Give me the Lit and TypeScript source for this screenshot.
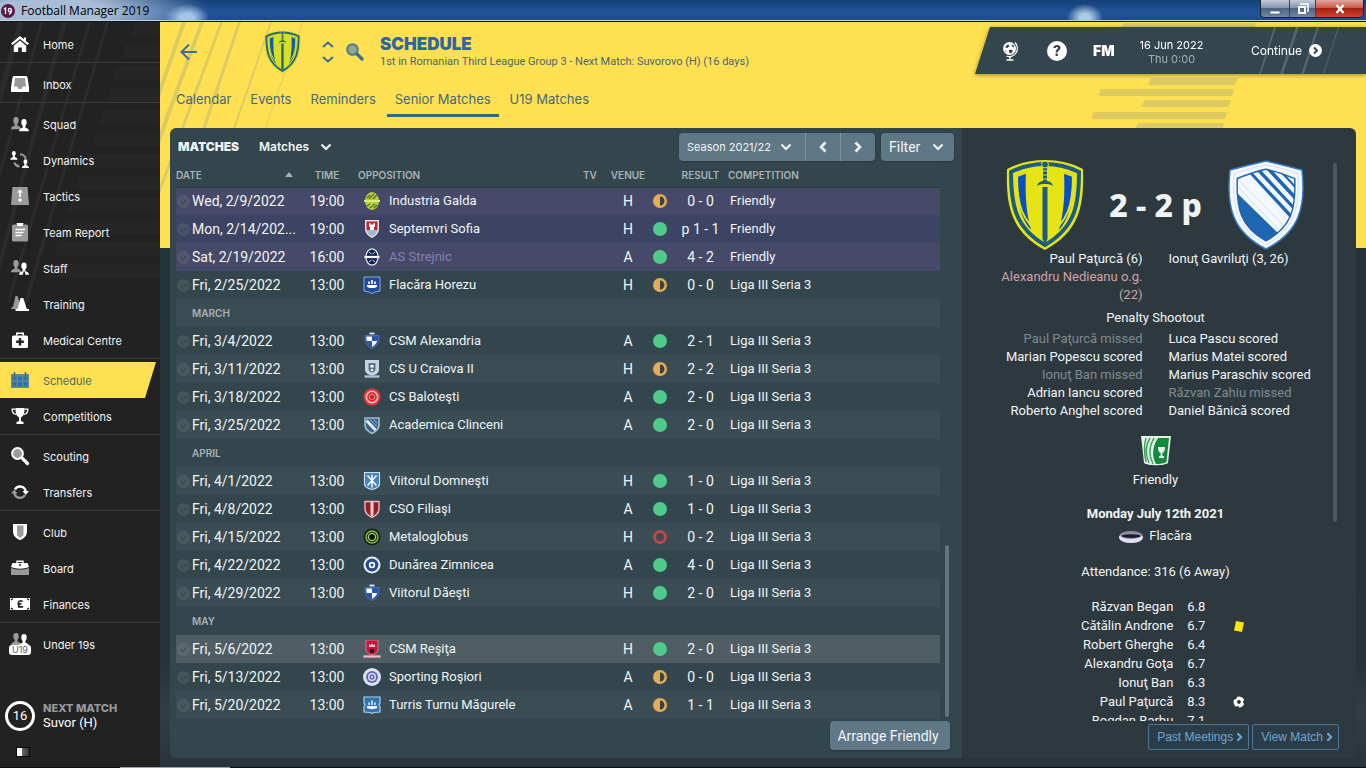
import { LitElement, html, svg, css, nothing } from "lit";
import { customElement, query } from "lit/decorators.js";
import { classMap } from "lit/directives/class-map.js";

const W = "#ffffff";
const G = "#9a9a9a";

/* Sidebar glyphs, drawn on an 18 x 18 grid */
const person = (x: number, y: number, fill: string) => svg`
  <g transform="translate(${x} ${y})" fill=${fill}>
    <ellipse cx="5" cy="3.4" rx="2.7" ry="3.4"/>
    <path d="M0 12.2c.2-2.4 1.500-2.900 3.600-3.500V6h2.800v2.700c2.100.6 3.400 1.100 3.600 3.500z"/>
  </g>`;

const glyphs: Record<string, unknown> = {
  home: svg`<path d="M9 1 0 8.600l1.500 1.500L9 3.900l7.500 6.200L18 8.600l-3-2.500V2.500h-2.200v1.700z" fill=${W}/><path d="M9 5.500l-6.200 5.200V17h4.400v-4.500h3.600V17h4.400v-6.300z" fill=${W}/>`,
  inbox: svg`<path d="M3.500 1h11c1 0 1.800.6 2 1.600L18 12v5H0v-5l1.500-9.400C1.700 1.600 2.500 1 3.500 1z" fill=${W}/><path d="M4 3h10l1 8.500h-3.200L10.500 14h-3l-1.300-2.500H3z" fill=${G}/>`,
  squad: svg`${person(0, 2, G)}${person(8, 4, W)}`,
  dynamics: svg`<g transform="scale(.72)">${person(-1, 0, W)}${person(15, 11.500, W)}</g><path d="M9 3.200a6.500 6.500 0 0 1 5.800 4.600M8.500 15.500A6.500 6.500 0 0 1 3.200 11.500" fill="none" stroke=${G} stroke-width="2"/>`,
  tactics: svg`<path d="M1.500 0h15L18 18H0z" fill=${G}/><path d="M8.200 10V5.500H6L9 2.200l3 3.300H9.800V10z" fill=${W}/><circle cx="9" cy="13" r="1.700" fill=${W}/>`,
  report: svg`<rect x="1" y="1.500" width="16" height="17" rx="1.500" fill=${G}/><path d="M5.500 0h7l-1 3h-5z" fill=${W}/><path d="M4.500 6.500h9.500M4.500 9.500h8M4.500 12.500h6" stroke=${W} stroke-width="1.300"/>`,
  staff: svg`${person(0, 1, G)}${person(8, 3.500, W)}<path d="M12.500 12.500h1.400l.6 3.500h-2.600z" fill="#222"/>`,
  training: svg`<path d="M4.500 1h2l3 9-2 4H0l1-2h1z" fill=${G}/><path d="M9.500 3h2.800l3.500 11H18v2H4.500v-2h2z" fill=${W}/>`,
  medical: svg`<rect x="1" y="4.500" width="16" height="12.500" rx="1.500" fill=${W}/><path d="M5.800 4.500V2.200h6.400v2.300" fill="none" stroke=${W} stroke-width="1.600"/><path d="M9 7v7.500M5.200 10.700h7.600" stroke="#222" stroke-width="2.400"/>`,
  schedule: svg`<path d="M0 3h18v14H0z" fill="#5d8791"/><path d="M3.500 1v4M14.500 1v4" stroke="#39688a" stroke-width="1.500"/><path d="M1.500 5.500h4v4h-4zM7 5.500h4v4H7zM12.500 5.500h4v4h-4zM1.500 11h4v4.500h-4zM7 11h4v4.500H7zM12.500 11h4v4.500h-4z" fill="#2f6fae"/>`,
  trophy: svg`<path d="M4.500 1h9c.2 5-.8 8-3.600 9.500V14l2.600 1v2h-7v-2l2.600-1v-3.500C5.300 9 4.300 6 4.500 1z" fill=${W}/><path d="M4.500 2.200H1.200C1.200 6 2.600 7.200 5.500 7.400M13.500 2.200h3.300c0 3.800-1.400 5-4.300 5.200" fill="none" stroke=${W} stroke-width="1.300"/>`,
  scouting: svg`<circle cx="6.500" cy="6.500" r="5.400" fill=${G} stroke=${W} stroke-width="2"/><path d="M11.500 11.500l5 5" stroke=${W} stroke-width="3.200" stroke-linecap="round"/>`,
  transfers: svg`<path d="M4 6.500A5.800 5.800 0 0 1 14.700 8" fill="none" stroke=${W} stroke-width="2.400"/><path d="M11.500 8H18l-3.200 4z" fill=${W}/><path d="M14 12A5.800 5.800 0 0 1 3.300 10" fill="none" stroke=${G} stroke-width="2.400"/><path d="M0 10.500h6.500l-3.200-4z" fill=${G}/>`,
  club: svg`<path d="M2 1h14v7c0 5-3 7.500-7 9-4-1.500-7-4-7-9z" fill=${W}/><path d="M6 2.500h6.500V12c-1 1.300-2 2-3.300 2.800C8 14 7 13.300 6 12z" fill=${G}/>`,
  board: svg`<path d="M0 9c6 2.300 12 2.300 18 0v7H0z" fill=${G}/><path d="M1.500 4h15L18 8c-6 2.300-12 2.300-18 0z" fill=${W}/><path d="M6 4V2.200h6V4" fill="none" stroke=${W} stroke-width="1.400"/><circle cx="9" cy="6" r="1.100" fill="#222"/>`,
  finances: svg`<path d="M-1 3h20v12H-1z" fill=${W}/><path d="M0 5l2-1.500M18 5l-2-1.500M0 13l2 1.500M18 13l-2 1.500" stroke="#222" stroke-width="1.300"/><path d="M11.500 6.700c-.5-1.300-3.800-1.500-3.900.8 0 1.200.8 2.300.2 4.400h4.300M6.300 9h4.300" fill="none" stroke="#222" stroke-width="1.700"/>`,
};

interface NavItem { label: string; icon: string; active?: boolean }
const navGroups: NavItem[][] = [
  [{ label: "Home", icon: "home" }],
  [{ label: "Inbox", icon: "inbox" }],
  [
    { label: "Squad", icon: "squad" },
    { label: "Dynamics", icon: "dynamics" },
    { label: "Tactics", icon: "tactics" },
    { label: "Team Report", icon: "report" },
    { label: "Staff", icon: "staff" },
    { label: "Training", icon: "training" },
    { label: "Medical Centre", icon: "medical" },
  ],
  [
    { label: "Schedule", icon: "schedule", active: true },
    { label: "Competitions", icon: "trophy" },
  ],
  [
    { label: "Scouting", icon: "scouting" },
    { label: "Transfers", icon: "transfers" },
  ],
  [
    { label: "Club", icon: "club" },
    { label: "Board", icon: "board" },
    { label: "Finances", icon: "finances" },
  ],
  [{ label: "Under 19s", icon: "u19" }],
];

/* Small club crests, 18 x 18 */
const tinyShield = "M2 2h14v7c0 4-3 6.500-7 8.500C5 15.500 2 13 2 9z";
const crests: Record<string, unknown> = {
  galda: svg`<ellipse cx="9" cy="9" rx="7" ry="9" fill="#b9cf3c"/><path d="M4 6l3-3M6 7l5-5M10 7l4-4M4 14l3-2M7 16l5-4M11 16l3-3" stroke="#53681c" stroke-width="1.100"/><path d="M1 9h16" stroke="#dcea7c" stroke-width="2"/>`,
  sofia: svg`<path d="M2 0h14v9c0 4-3 7-7 9-4-2-7-5-7-9z" fill="#e9dede"/><path d="M3.500 1.500h11V10h-11z" fill="#c2242f"/><path d="M3.500 10h11c-.5 3-2.500 5-5.500 6.500C6 15 4 13 3.500 10z" fill="#9db9d8"/><path d="M6 3h1.500v1.500h3V3H12v4h-1v3H7V7H6z" fill="#fff"/>`,
  strejnic: svg`<ellipse cx="9" cy="9" rx="6" ry="8.200" fill="#14244f" stroke="#e9eef8" stroke-width="1.200"/><path d="M6 4l2.500 2M12 4L9.500 6M6 14l2.500-2M12 14l-2.500-2" stroke="#cfd9ee"/><path d="M1.500 9h15" stroke="#fff" stroke-width="2.200"/>`,
  horezu: svg`<path d="M1 1h16v14l-5 1-3 1.500L6 16l-5-1z" fill="#2249a0" stroke="#a9c0e8" stroke-width=".8"/><path d="M4 9h10v1.500c-1 2-9 2-10 0z" fill="#fff"/><path d="M6 8V5.500M9 8V4M12 8V5.500" stroke="#fff" stroke-width="1.700"/>`,
  checker: svg`<path d="M2 3.500h14v4c0 4-3 7-7 9-4-2-7-5-7-9z" fill="#2c55a8" stroke="#4f79c6" stroke-width=".8"/><path d="M9 4.500V9H3.800C3.500 8 3.400 6.500 3.400 4.500zM9 9h5.200c-.8 2.500-2.800 4.500-5.200 6z" fill="#fff"/><path d="M6.500 1.500h5" stroke="#dfe8f6" stroke-width="1.800"/>`,
  craiova: svg`<path d="M2 0h14v9c0 4-3 6-7 6.500C5 15 2 13 2 9z" fill="#c3d5e3"/><path d="M5.500 3h7v6c0 2-1.500 3-3.500 3.500C7 12 5.500 11 5.500 9z" fill="#54728c"/><path d="M7.500 5h3v2.500h-3zM8 9h2v2H8z" fill="#fff"/><path d="M1.500 16.500h15" stroke="#aac2d6" stroke-width="2.400"/>`,
  balotesti: svg`<circle cx="9" cy="9" r="8.700" fill="#d7343d"/><circle cx="9" cy="9" r="5.700" fill="none" stroke="#f5c4bd" stroke-width="1.600"/><circle cx="9" cy="9" r="2.600" fill="#b4262e" stroke="#f0a49c" stroke-width=".8"/>`,
  clinceni: svg`<path d=${tinyShield} fill="#3a648f" stroke="#9db9cf" stroke-width="1.600"/><path d="M3.500 4.500l9 9.500" stroke="#e6eff6" stroke-width="2.800"/><path d="M7 3.500l7 7M10.500 3.500l4 4" stroke="#9cb9d0"/>`,
  domnesti: svg`<path d="M1.500.5h15V12c0 3-3 4.500-7.500 5.500C4.500 16.500 1.500 15 1.500 12z" fill="#4382c4" stroke="#cfe2f3" stroke-width="1.100"/><path d="M9 2.500v13M4.500 3.500l9 10M13.500 3.500l-9 10" stroke="#fff" stroke-width="1.400"/>`,
  filiasi: svg`<path d="M2 1.500h14v7.500c0 4-3 6.500-7 8.500C5 15.500 2 13 2 9z" fill="#8f1f2b" stroke="#f1b9b9" stroke-width="1.400"/><path d="M7.200 2h3.600v13L9 16.500 7.200 15z" fill="#e88"/><path d="M9 2v14" stroke="#fff" stroke-width="1.200"/>`,
  metalo: svg`<circle cx="9" cy="9" r="8.500" fill="#17230f"/><circle cx="9" cy="9" r="6" fill="none" stroke="#86bb45" stroke-width="1.500"/><circle cx="9" cy="9" r="3.600" fill="#0d150a" stroke="#a9d564" stroke-width="1.300"/>`,
  dunarea: svg`<circle cx="9" cy="9" r="8.500" fill="#e8edf6"/><circle cx="9" cy="9" r="6.400" fill="#254a90"/><circle cx="9" cy="9" r="3.200" fill="#fff"/><circle cx="9" cy="9" r="1.500" fill="#254a90"/>`,
  resita: svg`<path d="M3 0h12v9c0 3-2.500 5-6 6-3.500-1-6-3-6-6z" fill="#c4173f" stroke="#e38aa0" stroke-width=".8"/><path d="M6 4l1.500 1.500L9 3.500l1.500 2L12 4v3H6z" fill="#f7d3da"/><path d="M7 9h4v4H7z" fill="#4d0b1b"/><path d="M.5 16.500h17" stroke="#eeb8c4" stroke-width="2.300"/>`,
  rosiori: svg`<circle cx="9" cy="9" r="9" fill="#dfe1f4"/><circle cx="9" cy="9" r="6" fill="#6669b8"/><circle cx="9" cy="9" r="3.300" fill="none" stroke="#e6e6f8" stroke-width="1.300"/><circle cx="9" cy="9" r="1" fill="#e6e6f8"/>`,
  turris: svg`<path d="M1 1h16v6l-1 2 1 2v5l-6 .5-2 1-2-1L1 16v-5l1-2-1-2z" fill="#3173ad" stroke="#a9d0ee" stroke-width="1.200"/><path d="M4 10h10v2c-1 1.500-9 1.500-10 0z" fill="#eaf4fc"/><path d="M6 9V6.500M9 9V4.500M12 9V6.500" stroke="#eaf4fc" stroke-width="1.500"/>`,
};

type Outcome = "win" | "draw" | "loss";
interface Match {
  date: string; time: string; team: string; crest: string;
  venue: "H" | "A"; outcome: Outcome; score: string; comp: string; muted?: boolean; selected?: boolean;
}
const L3 = "Liga III Seria 3";
const m = (date: string, time: string, team: string, crest: string, venue: "H" | "A", outcome: Outcome, score: string, comp = L3, extra: Partial<Match> = {}): Match =>
  ({ date, time, team, crest, venue, outcome, score, comp, ...extra });

const rows: (string | Match)[] = [
  m("Wed, 2/9/2022", "19:00", "Industria Galda", "galda", "H", "draw", "0 - 0", "Friendly"),
  m("Mon, 2/14/202...", "19:00", "Septemvri Sofia", "sofia", "H", "win", "p 1 - 1", "Friendly"),
  m("Sat, 2/19/2022", "16:00", "AS Strejnic", "strejnic", "A", "win", "4 - 2", "Friendly", { muted: true }),
  m("Fri, 2/25/2022", "13:00", "Flacăra Horezu", "horezu", "H", "draw", "0 - 0"),
  "MARCH",
  m("Fri, 3/4/2022", "13:00", "CSM Alexandria", "checker", "A", "win", "2 - 1"),
  m("Fri, 3/11/2022", "13:00", "CS U Craiova II", "craiova", "H", "draw", "2 - 2"),
  m("Fri, 3/18/2022", "13:00", "CS Baloteşti", "balotesti", "A", "win", "2 - 0"),
  m("Fri, 3/25/2022", "13:00", "Academica Clinceni", "clinceni", "A", "win", "2 - 0"),
  "APRIL",
  m("Fri, 4/1/2022", "13:00", "Viitorul Domneşti", "domnesti", "H", "win", "1 - 0"),
  m("Fri, 4/8/2022", "13:00", "CSO Filiaşi", "filiasi", "A", "win", "1 - 0"),
  m("Fri, 4/15/2022", "13:00", "Metaloglobus", "metalo", "H", "loss", "0 - 2"),
  m("Fri, 4/22/2022", "13:00", "Dunărea Zimnicea", "dunarea", "A", "win", "4 - 0"),
  m("Fri, 4/29/2022", "13:00", "Viitorul Dăeşti", "checker", "H", "win", "2 - 0"),
  "MAY",
  m("Fri, 5/6/2022", "13:00", "CSM Reşiţa", "resita", "H", "win", "2 - 0", L3, { selected: true }),
  m("Fri, 5/13/2022", "13:00", "Sporting Roşiori", "rosiori", "A", "draw", "0 - 0"),
  m("Fri, 5/20/2022", "13:00", "Turris Turnu Măgurele", "turris", "A", "draw", "1 - 1"),
];

const dots: Record<Outcome, unknown> = {
  win: svg`<circle cx="7" cy="7" r="7" fill="#4fca8b"/>`,
  draw: svg`<circle cx="7" cy="7" r="7" fill="#e2ad55"/><path d="M7 2.500a4.500 4.500 0 0 1 0 9z" fill="#3a4046"/>`,
  loss: svg`<circle cx="7" cy="7" r="5.500" fill="none" stroke="#bf474c" stroke-width="3"/>`,
};

const shootout: { left: string; leftMiss: boolean; right: string; rightMiss: boolean }[] = [
  { left: "Paul Paţurcă missed", leftMiss: true, right: "Luca Pascu scored", rightMiss: false },
  { left: "Marian Popescu scored", leftMiss: false, right: "Marius Matei scored", rightMiss: false },
  { left: "Ionuţ Ban missed", leftMiss: true, right: "Marius Paraschiv scored", rightMiss: false },
  { left: "Adrian Iancu scored", leftMiss: false, right: "Răzvan Zahiu missed", rightMiss: true },
  { left: "Roberto Anghel scored", leftMiss: false, right: "Daniel Bănică scored", rightMiss: false },
];

const ratings: { name: string; value: string; mark?: "card" | "goal" }[] = [
  { name: "Răzvan Began", value: "6.8" },
  { name: "Cătălin Androne", value: "6.7", mark: "card" },
  { name: "Robert Gherghe", value: "6.4" },
  { name: "Alexandru Goţa", value: "6.7" },
  { name: "Ionuţ Ban", value: "6.3" },
  { name: "Paul Paţurcă", value: "8.3", mark: "goal" },
  { name: "Bogdan Barbu", value: "7.1" },
];

/* Club crest with the sword, 78 x 90 */
const swordCrest = (cls: string, body: string, line: string, panel: string) => html`
  <svg class=${cls} viewBox="0 0 78 90" aria-hidden="true">
    <path d="M39 0C52 0 66 3 77 9c1 34-2 62-38 81C3 71 0 43 1 9 12 3 26 0 39 0z" fill=${body}/>
    <path d="M39 4c12 0 24 3 34 8 0 31-3 55-34 73C8 67 5 43 5 12 15 7 27 4 39 4z" fill="none" stroke=${line} stroke-width="4"/>
    <path d="M11 15l9-3c-1 22 0 40 5 58C14 58 11 40 11 15zM67 15l-9-3c1 22 0 40-5 58 11-12 14-30 14-55z" fill=${panel}/>
    <path d="M39 10c9 0 18 2 28 6 0 28-4 45-28 63-24-18-28-35-28-63 10-4 19-6 28-6z" fill="none" stroke=${body} stroke-width="2"/>
    <path d="M36.500 27h5v52l-2.500 5-2.500-5z" fill=${line}/>
    <path d="M31 26c1-4 4-5 8-5s7 1 8 5c-3-2-5-2-8-2s-5 0-8 2z" fill=${line}/>
    <path d="M37 7h4v15h-4z" fill=${line}/>
    <path d="M36 11h6M36 15h6M36 19h6" stroke=${body} stroke-width="1"/>
    <circle cx="39" cy="4.500" r="3.500" fill=${line} stroke=${body} stroke-width="1"/>
  </svg>`;

const stripedCrest = html`
  <svg class="crest-big" viewBox="0 0 78 90" aria-hidden="true">
    <defs><clipPath id="inner"><path d="M39 10c9 2 19 5 28 9 1 30-3 47-28 61C14 66 10 48 11 19c10-4 19-7 28-9z"/></clipPath></defs>
    <path d="M39 1c13 3 25 6 36 9 4 36-2 62-36 79C5 72-1 46 3 10 14 7 26 4 39 1z" fill="#f4f8ff" stroke="#2f78c4" stroke-width="1.500"/>
    <path d="M39 5c12 2 22 5 32 9 2 32-3 55-32 71C10 69 5 46 7 14c10-4 20-7 32-9z" fill="none" stroke="#d8dfee" stroke-width="1"/>
    <path d="M39 10c9 2 19 5 28 9 1 30-3 47-28 61C14 66 10 48 11 19c10-4 19-7 28-9z" fill="none" stroke="#1f66b0" stroke-width="3"/>
    <g clip-path="url(#inner)">
      <path d="M0 0h78v90H0z" fill="#1f66b0"/>
      <path d="M8 12h13l44 48-13 14L8 31z" fill="#f4f8ff"/>
      <path d="M27 11l45 48M36 9l37 40M47 9l27 29M57 10l16 17" stroke="#f4f8ff" stroke-width="4.500"/>
      <path d="M8 24l48 50M10 18l52 53" stroke="#d3d9e8" stroke-width="1"/>
    </g>
  </svg>`;

const chevronDown = (cls = "") => html`<svg class="chev ${cls}" viewBox="0 0 12 8" aria-hidden="true"><path d="M1.500 1.500 6 6l4.500-4.500" fill="none" stroke="currentColor" stroke-width="2.200"/></svg>`;
const chevronSide = (d: string) => html`<svg class="side" viewBox="0 0 8 12" aria-hidden="true"><path d=${d} fill="none" stroke="currentColor" stroke-width="2.500"/></svg>`;
const RIGHT = "M1.500 1.500 6 6l-4.500 4.500";
const LEFT = "M6.500 1.500 2 6l4.500 4.500";

@customElement("fm-sidebar")
class FmSidebar extends LitElement {
  static styles = css`
    :host { display: flex; flex-direction: column; background: #222; position: relative; overflow: hidden; color: #f2f2f2; font: 11px/16px "Inter", "Liberation Sans", sans-serif; }
    .deco { position: absolute; left: 0; top: 0; width: 160px; height: 400px; pointer-events: none; }
    nav { position: relative; }
    .group { border-top: 1px solid #3b3b3b; padding-top: 3px; }
    .group:first-child { border-top-color: transparent; }
    a { display: flex; align-items: center; height: 36px; padding: 0 0 0 11px; gap: 14px; color: inherit; text-decoration: none; }
    a svg { width: 18px; height: 18px; overflow: visible; flex: none; }
    .text { padding-top: 2px; }
    .active { background: #fee052; color: #4d6a5c; clip-path: polygon(0 0, 156px 0, 145px 100%, 0 100%); }
    .u19 { display: grid; width: 22px; height: 22px; margin: 0 -2px; }
    .u19 svg { grid-area: 1 / 1; justify-self: center; }
    .u19 span { grid-area: 1 / 1; align-self: end; background: #fff; color: #47618a; border-radius: 3px; font-size: 9px; line-height: 10px; text-align: center; z-index: 1; }
    .next { position: relative; display: flex; align-items: center; gap: 8px; padding: 39px 5px 0; color: #fff; }
    .count { box-sizing: border-box; width: 30px; height: 30px; border: 3px solid #fff; border-radius: 50%; display: grid; place-items: center; font: 13px/14px Roboto, sans-serif; }
    .label { color: #989898; font-weight: 800; line-height: 14px; }
    .who { font: 13px/16px Roboto, sans-serif; }
    .kit { width: 12px; height: 8px; margin: 16px 0 0 16px; background: linear-gradient(90deg, #fff 45%, #666 45%, #333); border: 1px solid #0d0d0d; }
  `;

  render() {
    return html`
      <svg class="deco" viewBox="0 0 160 400" aria-hidden="true">
        <path d="M18 0h6L-30 190h-6zM40 0h3L-20 230h-3zM62 0h5L-14 300h-4zM88 0h3L10 280H7zM106 0h3L28 280h-4z" fill="#2b2b2b"/>
        <path d="M135 0h25v14h-29zM126 22h34v14h-38zM116 44h44v14h-48zM110 66h50v14h-54zM104 88h56v14h-60zM96 110h64v14H92zM88 132h72v14H84zM78 154h82v14H74zM72 176h88v14H68zM66 198h94v14H62zM58 220h102v14H54zM50 242h110v14H46z" fill="#262626"/>
      </svg>
      <nav>
        ${navGroups.map((g) => html`
          <div class="group">
            ${g.map((i) => html`
              <a href="#" class=${classMap({ active: !!i.active })}>
                ${i.icon === "u19"
                  ? html`<span class="u19"><svg viewBox="0 0 18 18">${person(0, 0, G)}${person(8, 1, W)}</svg><span>U19</span></span>`
                  : html`<svg viewBox="0 0 18 18" aria-hidden="true">${glyphs[i.icon]}</svg>`}
                <span class="text">${i.label}</span>
              </a>`)}
          </div>`)}
      </nav>
      <div class="next">
        <div class="count">16</div>
        <div><div class="label">NEXT MATCH</div><div class="who">Suvor (H)</div></div>
      </div>
      <div class="kit"></div>
    `;
  }
}

@customElement("fm-matches")
class FmMatches extends LitElement {
  @query(".scroll") scroller!: HTMLElement;

  static styles = css`
    :host { display: flex; flex-direction: column; min-height: 0; box-sizing: border-box; padding: 4px 8px 8px 6px; background: #33464d; color: #f1f4f5; font: 14px/18px Roboto, "Liberation Sans", sans-serif; }
    .bar { display: flex; align-items: center; height: 30px; font-family: Inter, sans-serif; }
    h2 { margin: 0 0 0 2px; font-size: 12px; line-height: 18px; font-weight: 900; width: 62px; }
    .pick { display: grid; align-items: center; }
    .pick > * { grid-area: 1 / 1; }
    select, button { font: inherit; color: inherit; border: 0; background: none; margin: 0; padding: 0; appearance: none; cursor: pointer; }
    .pick svg { justify-self: end; pointer-events: none; }
    .view { margin-left: 19px; font-size: 12px; font-weight: 600; width: 73px; }
    .view select { width: 100%; }
    .chev { width: 12px; height: 8px; }
    .tools { margin-left: auto; display: flex; gap: 6px; height: 28px; font-size: 11px; }
    .season { display: flex; background: #607785; border-radius: 4px; box-shadow: 0 1px 2px #0004; }
    .season .pick { width: 126px; }
    .season select { padding-left: 8px; width: 100%; height: 28px; }
    .season .chev { margin-right: 13px; }
    .season button { width: 35px; border-left: 1px solid #7f929d; display: grid; place-items: center; }
    .side { width: 8px; height: 12px; }
    .filter { background: #607785; border-radius: 4px; box-shadow: 0 1px 2px #0004; width: 73px; display: flex; align-items: center; justify-content: space-between; padding: 0 10px 0 8px; font: 14px/18px Roboto, sans-serif; }
    .body { flex: 1; min-height: 0; display: grid; grid-template-columns: 1fr 11px; padding-right: 3px; }
    .scroll { overflow-y: auto; scrollbar-width: none; min-height: 0; }
    .rail { display: flex; flex-direction: column; justify-content: flex-end; align-items: flex-end; padding: 0 2px 2px 0; }
    .thumb { width: 4px; height: 31%; border-radius: 2px; background: #64747b; }
    table { width: 100%; border-collapse: separate; border-spacing: 0; table-layout: fixed; }
    th, td { padding: 0; height: 28px; text-align: left; font-weight: 400; white-space: nowrap; }
    thead th { position: sticky; top: 0; z-index: 1; height: 25px; border-bottom: 1px solid #2a3a41; background: #33464d; color: #a7b2b6; font: 600 10px/14px Inter, sans-serif; }
    .c-date { width: 124px; } .c-time { width: 54px; } .c-opp { width: 229px; } .c-tv { width: 22px; }
    .c-venue { width: 46px; } .c-dot { width: 18px; } .c-res { width: 59px; }
    .sort { display: flex; align-items: center; justify-content: space-between; padding-right: 7px; }
    .sort svg { width: 8px; height: 5px; }
    thead .mid, .mid { text-align: center; }
    .res { padding-left: 4px; }
    .h-opp { padding-left: 4px; }
    tbody tr:nth-child(odd) { background: #3a4c54; }
    tbody tr.friendly { background: #3d4362; }
    tbody tr.friendly:nth-child(odd) { background: #464a68; }
    tbody tr.selected { background: #4f5e65; }
    .when { display: flex; align-items: center; gap: 2px; padding-left: 1px; }
    .when svg { width: 13px; height: 13px; }
    .team { display: flex; align-items: center; gap: 8px; padding-left: 9px; font-size: 13px; }
    .team svg { width: 18px; height: 18px; flex: none; }
    .muted { color: #8480b4; }
    .dot { display: block; width: 14px; height: 14px; margin: 0 auto; }
    .comp { padding-left: 2px; font-size: 13px; }
    .month { padding-left: 16px; color: #a7b2b6; font: 600 10px/14px Inter, sans-serif; }
    .foot { display: flex; justify-content: flex-end; padding: 2px 4px 0 0; }
    .arrange { background: #607785; border-radius: 4px; height: 29px; width: 120px; box-shadow: 0 1px 2px #0004; padding-right: 4px; }
  `;

  firstUpdated() {
    this.scroller.scrollTop = this.scroller.scrollHeight;
  }

  private row(r: string | Match) {
    if (typeof r === "string") return html`<tr><th class="month" colspan="8" scope="rowgroup">${r}</th></tr>`;
    return html`
      <tr class=${classMap({ friendly: r.comp === "Friendly", selected: !!r.selected })}>
        <td><div class="when"><svg viewBox="0 0 13 13" aria-hidden="true"><circle cx="6.500" cy="6.500" r="6.500" fill="#8a8f8c" opacity=".2"/><path d="M3.500 6.500l2.300 2.300 4-4" fill="none" stroke="#2a383f" stroke-width="1.500" opacity=".45"/></svg>${r.date}</div></td>
        <td class="mid">${r.time}</td>
        <td><div class="team"><svg viewBox="0 0 18 18" aria-hidden="true">${crests[r.crest]}</svg><span class=${classMap({ muted: !!r.muted })}>${r.team}</span></div></td>
        <td></td>
        <td class="mid">${r.venue}</td>
        <td><svg class="dot" viewBox="0 0 14 14" aria-hidden="true">${dots[r.outcome]}</svg></td>
        <td class="mid res">${r.score}</td>
        <td class="comp">${r.comp}</td>
      </tr>`;
  }

  render() {
    return html`
      <div class="bar">
        <h2>MATCHES</h2>
        <div class="pick view">
          <select aria-label="View"><option>Matches</option></select>${chevronDown()}
        </div>
        <div class="tools">
          <div class="season">
            <div class="pick"><select aria-label="Season"><option>Season 2021/22</option></select>${chevronDown()}</div>
            <button aria-label="Previous season">${chevronSide(LEFT)}</button>
            <button aria-label="Next season">${chevronSide(RIGHT)}</button>
          </div>
          <button class="filter">Filter ${chevronDown()}</button>
        </div>
      </div>
      <div class="body">
        <div class="scroll">
          <table>
            <colgroup><col class="c-date"><col class="c-time"><col class="c-opp"><col class="c-tv"><col class="c-venue"><col class="c-dot"><col class="c-res"><col></colgroup>
            <thead>
              <tr>
                <th><div class="sort">DATE<svg viewBox="0 0 8 5" aria-hidden="true"><path d="M4 0l4 5H0z" fill="#a7b2b6"/></svg></div></th>
                <th class="mid">TIME</th><th class="h-opp">OPPOSITION</th><th>TV</th><th class="mid">VENUE</th><th></th><th class="mid res">RESULT</th><th>COMPETITION</th>
              </tr>
            </thead>
            <tbody>${rows.map((r) => this.row(r))}</tbody>
          </table>
        </div>
        <div class="rail"><div class="thumb"></div></div>
      </div>
      <div class="foot"><button class="arrange">Arrange Friendly</button></div>
    `;
  }
}

@customElement("fm-report")
class FmReport extends LitElement {
  static styles = css`
    :host { display: flex; flex-direction: column; min-height: 0; box-sizing: border-box; padding: 32px 17px 8px 16px; background: #2e393f; color: #f1f4f5; font: 13px/18px Roboto, "Liberation Sans", sans-serif; }
    .view { flex: 1; min-height: 0; display: grid; grid-template-columns: 1fr 4px; padding-right: 2px; }
    .scroll { overflow: hidden; padding: 0 4px; min-height: 0; }
    .thumb { width: 4px; height: 64%; margin-top: 3px; background: #4d585e; border-radius: 2px; }
    .head { display: flex; justify-content: center; align-items: center; gap: 23px; }
    .score { font: 800 32px/40px "Noto Sans", sans-serif; white-space: nowrap; width: 97px; text-align: center; }
    .crest-big { width: 78px; height: 90px; flex: none; }
    .pair { display: grid; grid-template-columns: 1fr 1fr; column-gap: 26px; }
    .pair > :nth-child(odd) { text-align: right; }
    .own { color: #cfa2a6; }
    .miss { color: #7f8a90; }
    .center { text-align: center; }
    .title { padding: 5px 0 3px; }
    .logo { display: block; width: 32px; height: 32px; margin: 15px auto 4px; }
    .day { font-weight: 700; margin-top: 16px; }
    .ground { display: flex; justify-content: center; align-items: center; gap: 6px; margin-top: 4px; }
    .ground svg { width: 24px; height: 13px; }
    .att { margin: 18px 0 16px; }
    .rating { display: grid; grid-template-columns: 2fr 32px 1fr; column-gap: 14px; line-height: 19px; align-items: center; }
    .rating > :first-child { text-align: right; }
    .rating svg { width: 12px; height: 12px; display: block; }
    .foot { display: flex; justify-content: flex-end; gap: 3px; padding-top: 3px; }
    .foot button { height: 26px; padding: 0 5px 0 8px; display: flex; align-items: center; gap: 3px; color: #6fa5d1; background: #2b3d48; border: 1px solid #4e7593; border-radius: 2px; font: 12px/16px "Liberation Sans", sans-serif; cursor: pointer; }
    .side { width: 7px; height: 10px; }
  `;

  render() {
    return html`
      <div class="view">
        <div class="scroll">
          <div class="head">
            ${swordCrest("crest-big", "#e6e414", "#1b5c80", "#0a50c4")}
            <div class="score">2 - 2 p</div>
            ${stripedCrest}
          </div>
          <div class="pair">
            <div>Paul Paţurcă (6)<br /><span class="own">Alexandru Nedieanu o.g.<br />(22)</span></div>
            <div>Ionuţ Gavriluţi (3, 26)</div>
          </div>
          <div class="center title">Penalty Shootout</div>
          <div class="pair">
            ${shootout.map((s) => html`
              <div class=${classMap({ miss: s.leftMiss })}>${s.left}</div>
              <div class=${classMap({ miss: s.rightMiss })}>${s.right}</div>`)}
          </div>
          <svg class="logo" viewBox="0 0 32 32" aria-hidden="true">
            <path d="M1 1h30l-3 27c-4 3-20 3-24 0z" fill="#e9efe9"/>
            <path d="M18 3h11l-2.500 24c-2 1.500-7 2-10.500 2C11 21 13 10 18 3z" fill="#128a3e"/>
            <path d="M14 3C9 11 8 19 13 29M10 3C5 11 5 19 9 28M6 3C4 10 4 18 6 27" fill="none" stroke="#3da562" stroke-width="1.500"/>
            <path d="M18 12h7c0 4-1.300 5.500-2.700 6v2.500l1.700 1V23h-5v-1.500l1.700-1V18c-1.400-.5-2.700-2-2.700-6z" fill="#e9efe9"/>
          </svg>
          <div class="center">Friendly</div>
          <div class="center day">Monday July 12th 2021</div>
          <div class="ground">
            <svg viewBox="0 0 24 13" aria-hidden="true"><ellipse cx="12" cy="7.500" rx="12" ry="5.500" fill="#e2e0f0"/><ellipse cx="12" cy="5" rx="11" ry="4" fill="#8f8ca6"/><ellipse cx="12" cy="6" rx="9.500" ry="1.800" fill="#1c1a26"/></svg>
            <span>Flacăra</span>
          </div>
          <div class="center att">Attendance: 316 (6 Away)</div>
          <div>
            ${ratings.map((r) => html`
              <div class="rating"><div>${r.name}</div><div>${r.value}</div>
                <div>${r.mark === "card"
                  ? html`<svg viewBox="0 0 12 12"><path d="M3 1l8 1.500L9 12 1 10.500z" fill="#fde30a"/></svg>`
                  : r.mark === "goal"
                  ? html`<svg viewBox="0 0 12 12"><circle cx="6" cy="6" r="5.500" fill="#fff"/><path d="M6 3.800l2 1.500-.8 2.400H4.800L4 5.300zM2.500 0l1.500 2-2 1.500L0 3zM12 4l-2 1 .5 2.500L12 8zM4 10l2 .5-.5 1.500H3z" fill="#252c31"/></svg>`
                  : nothing}</div>
              </div>`)}
          </div>
        </div>
        <div class="thumb"></div>
      </div>
      <div class="foot">
        <button>Past Meetings ${chevronSide(RIGHT)}</button>
        <button>View Match ${chevronSide(RIGHT)}</button>
      </div>
    `;
  }
}

@customElement("app-root")
class AppRoot extends LitElement {
  static styles = css`
    :host { display: grid; grid-template-rows: 22px minmax(0, 1fr) 1px; grid-template-columns: 160px minmax(0, 1fr); height: 100vh; overflow: hidden; background: #0b1014; }
    .titlebar { grid-column: 1 / -1; box-sizing: border-box; display: flex; align-items: center; gap: 6px; padding-left: 1px; border-bottom: 1px solid #10151c;
      box-shadow: inset 0 -1px #c4d3e2;
      background: radial-gradient(ellipse 22px 14px at 187px 18px, #a3c5e8 30%, #a3c5e800), radial-gradient(ellipse 18px 14px at 1085px 18px, #a9cbe2 30%, #a9cbe200), radial-gradient(ellipse 160px 40px at 50px 12px, #a9bdd6 35%, #a9bdd600), linear-gradient(#164078, #23559a 60%, #1b4a86);
      font: 12px/18px "Open Sans", sans-serif; color: #000; }
    .titlebar svg { width: 14px; height: 14px; }
    .titlebar .name { flex: 1; }
    .win { display: flex; align-self: flex-start; margin-right: 2px; border: 1px solid #1b2230; border-top: 0; border-radius: 0 0 5px 5px; overflow: hidden; }
    .win button { height: 17px; width: 29px; padding: 0; border: 0; border-right: 1px solid #33415a; background: linear-gradient(#c2ccd8, #8494aa 45%, #4f6482 50%, #7287a4); display: grid; place-items: center; }
    .win .mid { width: 26px; }
    .win .close { width: 47px; border: 0; background: linear-gradient(#e2a79d, #c95a4a 45%, #a81f12 50%, #c8452f); }
    .main { position: relative; display: grid; grid-template-rows: 106px minmax(0, 1fr); padding: 0 10px 9px; background: linear-gradient(#fee052 226px, #24323a 226px, #26333b 640px, #343d46 690px, #2a333b); }
    .deco { position: absolute; inset: 0; width: 100%; height: 226px; pointer-events: none; }
    header { position: relative; display: grid; grid-template-rows: 60px 46px; font-family: Inter, sans-serif; color: #3d6f92; }
    .top { display: flex; align-items: center; }
    .icon-btn { border: 0; background: none; padding: 0; color: inherit; display: grid; }
    .back { margin-left: 10px; }
    .back svg { width: 18px; height: 18px; }
    .badge { width: 37px; height: 44px; margin: 0 21px 0 66px; }
    .step svg { width: 12px; height: 22px; }
    .find { margin: 0 16px 0 12px; }
    .find svg { width: 18px; height: 18px; }
    h1 { margin: 0; font-size: 17px; line-height: 20px; font-weight: 900; color: #2c67a1; }
    .sub { font: 11px/16px Roboto, sans-serif; color: #4a6672; }
    .strip { margin: 0 -10px 0 auto; align-self: flex-start; filter: drop-shadow(0 1px 2px #0006); padding-top: 5px; }
    .strip-in { height: 47px; width: 391px; box-sizing: border-box; background: #33464d; clip-path: polygon(15px 0, 100% 0, 100% 100%, 0 100%); display: flex; align-items: center; color: #fff; padding: 0 44px 0 27px; position: relative; }
    .globe { width: 17px; height: 20px; }
    .strip-in .lines { position: absolute; left: 0; top: 0; width: 391px; height: 47px; }
    .help { width: 20px; height: 20px; border-radius: 50%; background: #fff; color: #33464d; font: 800 14px/20px Inter, sans-serif; text-align: center; margin-left: 28px; }
    .fm { font: 900 14px/18px Inter, sans-serif; margin-left: 26px; }
    .date { margin-left: 25px; padding-top: 2px; text-align: center; font-size: 11px; line-height: 14px; }
    .date small { display: block; font-size: 11px; color: #a3b0b5; }
    .go { margin-left: auto; display: flex; align-items: center; gap: 7px; border: 0; padding: 0; background: none; color: #fff; font: 12px/16px Inter, sans-serif; position: relative; }
    .go svg { width: 13px; height: 13px; }
    .tabs { display: flex; gap: 3px; align-items: flex-start; padding: 7px 0 0; margin-left: -2px; }
    .tabs a { padding: 1px 8px 6px; font-size: 13px; line-height: 18px; color: #44697d; text-decoration: none; border-bottom: 3px solid transparent; }
    .tabs a.on { border-color: #34658c; }
    .panel { position: relative; display: grid; grid-template-columns: minmax(0, 792fr) minmax(0, 394fr); border-radius: 6px; overflow: hidden; }
    .edge { grid-column: 1 / -1; background: linear-gradient(90deg, #0b1014 120px, #9aa3ab 120px, #9aa3ab 230px, #0b1014 230px); }
  `;

  render() {
    return html`
      <div class="titlebar">
        <svg viewBox="0 0 14 14" aria-hidden="true"><circle cx="7" cy="7" r="7" fill="#5b1a4c"/><path d="M3 5l1.500-1v6M10.500 6a1.600 1.600 0 1 0-1.600 1.600c1 0 1.600-.6 1.600-1.600 0 2-.3 3.500-2.500 4" fill="none" stroke="#fff" stroke-width="1.300"/></svg>
        <span class="name">Football Manager 2019</span>
        <div class="win">
          <button aria-label="Minimise"><svg viewBox="0 0 14 14"><path d="M2 9h10v3H2z" fill="#fff" stroke="#45536b" stroke-width=".7"/></svg></button>
          <button class="mid" aria-label="Restore"><svg viewBox="0 0 14 14"><path d="M5 3V2h7v7h-1" fill="none" stroke="#fff" stroke-width="1.500"/><path d="M3 5h6v6H3z" fill="none" stroke="#fff" stroke-width="2"/></svg></button>
          <button class="close" aria-label="Close"><svg viewBox="0 0 14 14"><path d="M3.500 3l7 8M10.500 3l-7 8" stroke="#fff" stroke-width="2.400"/></svg></button>
        </div>
      </div>
      <fm-sidebar></fm-sidebar>
      <div class="main">
        <svg class="deco" viewBox="0 0 1206 226" preserveAspectRatio="none" aria-hidden="true">
          <path d="M22 0h4L-40 190v-14zM40 0h4L-38 226h-5zM60 0h3L-5 185v-8zM78 0h3L28 160h-4zM110 0h2L60 150h-2zM142 0h1L94 140h-1z" fill="#dccb62"/>
          <path d="M963 1h133l-1 4H961zM991 56h87l-3 7h-87zM941 67h133l-2 7H938zM985 78h86l-3 7h-87zM934 90h133l-2 7H931zM978 101h86l-2 7h-87z" fill="#decb5f"/>
        </svg>
        <header>
          <div class="top">
            <button class="icon-btn back" aria-label="Back"><svg viewBox="0 0 18 18"><path d="M17 9H2M9 1.500 1.500 9 9 16.500" fill="none" stroke="currentColor" stroke-width="2"/></svg></button>
            ${swordCrest("badge", "#d9e022", "#28657c", "#1459b4")}
            <button class="icon-btn step" aria-label="Switch club"><svg viewBox="0 0 12 22"><path d="M1 6l5-4.500L11 6M1 16l5 4.500L11 16" fill="none" stroke="currentColor" stroke-width="2"/></svg></button>
            <button class="icon-btn find" aria-label="Search"><svg viewBox="0 0 18 18"><circle cx="6.500" cy="6.500" r="5.300" fill="#8fa88b" stroke="#4f7d94" stroke-width="2"/><path d="M11 11l5 5" stroke="#3d6f92" stroke-width="3.200" stroke-linecap="round"/></svg></button>
            <div><h1>SCHEDULE</h1><div class="sub">1st in Romanian Third League Group 3 - Next Match: Suvorovo (H) (16 days)</div></div>
            <div class="strip"><div class="strip-in">
              <svg class="lines" viewBox="0 0 391 47" aria-hidden="true"><path d="M299 0h2l-15 47h-2zM321 0h3l-16 47h-3zM342 0h2l-15 47h-3zM363 0h1l-15 47h-1z" fill="#52656c"/></svg>
              <svg class="globe" viewBox="0 0 17 20" aria-hidden="true"><circle cx="7.500" cy="7.500" r="6.500" fill="#fff"/><path d="M4 4.500l2.500-1 1 1.500-2 2-2-.5zM9.500 3.500l2.500 1v2l-2-1zM7 9l2.500-.5 1.500 1.500-2 2.500L7 11.500zM3 9.500l1.500 1-.3 1.300z" fill="#33464d"/><path d="M13 1.500a8.300 8.300 0 0 1-8.500 13.700" fill="none" stroke="#fff" stroke-width="1.300"/><path d="M8 15.500v3M4.500 19h7" stroke="#fff" stroke-width="1.400"/></svg>
              <span class="help">?</span>
              <span class="fm">FM</span>
              <div class="date">16 Jun 2022<small>Thu 0:00</small></div>
              <button class="go">Continue <svg viewBox="0 0 13 13"><circle cx="6.500" cy="6.500" r="6.500" fill="#fff"/><path d="M5 3.500l3 3-3 3" fill="none" stroke="#33464d" stroke-width="2"/></svg></button>
            </div></div>
          </div>
          <nav class="tabs">
            <a href="#">Calendar</a><a href="#">Events</a><a href="#">Reminders</a><a href="#" class="on">Senior Matches</a><a href="#">U19 Matches</a>
          </nav>
        </header>
        <div class="panel"><fm-matches></fm-matches><fm-report></fm-report></div>
      </div>
      <div class="edge"></div>
    `;
  }
}
